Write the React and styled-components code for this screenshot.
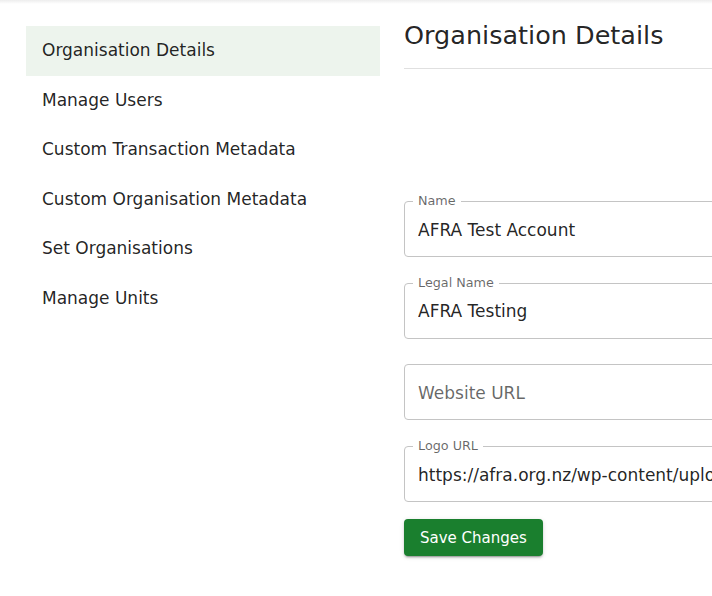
import React, { useState } from 'react'
import styled, { createGlobalStyle } from 'styled-components'

const GlobalStyle = createGlobalStyle`
  html, body {
    margin: 0;
    padding: 0;
    background: #fff;
  }
  body {
    font-family: 'DejaVu Sans', 'Liberation Sans', sans-serif;
    font-size: 17px;
    color: rgba(0, 0, 0, 0.87);
  }
  * {
    box-sizing: border-box;
  }
`

const navItems = [
  'Organisation Details',
  'Manage Users',
  'Custom Transaction Metadata',
  'Custom Organisation Metadata',
  'Set Organisations',
  'Manage Units',
]

const fields = [
  { label: 'Name', value: 'AFRA Test Account' },
  { label: 'Legal Name', value: 'AFRA Testing' },
  { label: 'Website URL', value: '' },
  {
    label: 'Logo URL',
    value: 'https://afra.org.nz/wp-content/uploads/2021/03/afra-logo.png',
  },
]

const App = () => {
  const [active, setActive] = useState(0)
  const [values, setValues] = useState(fields.map((f) => f.value))

  const update = (i, v) => {
    const next = [...values]
    next[i] = v
    setValues(next)
  }

  return (
    <Page>
      <GlobalStyle />
      <TopShade />
      <Layout>
        <Sidebar>
          {navItems.map((item, i) => (
            <NavItem
              key={item}
              $active={i === active}
              onClick={() => setActive(i)}
            >
              {item}
            </NavItem>
          ))}
        </Sidebar>
        <Main>
          <Heading>Organisation Details</Heading>
          <Form onSubmit={(e) => e.preventDefault()}>
            {fields.map((f, i) => (
              <Field key={f.label}>
                {values[i] ? <Label>{f.label}</Label> : null}
                <Input
                  type='text'
                  value={values[i]}
                  placeholder={values[i] ? '' : f.label}
                  onChange={(e) => update(i, e.target.value)}
                />
              </Field>
            ))}
            <SaveButton type='submit'>Save Changes</SaveButton>
          </Form>
        </Main>
      </Layout>
    </Page>
  )
}

const Page = styled.div`
  width: 712px;
  height: 596px;
  overflow: hidden;
`

const TopShade = styled.div`
  height: 4px;
  background: linear-gradient(rgba(0, 0, 0, 0.07), rgba(0, 0, 0, 0));
`

const Layout = styled.div`
  display: grid;
  grid-template-columns: 354px 520px;
  column-gap: 24px;
  padding: 14px 0 0 26px;
`

const Sidebar = styled.nav`
  display: flex;
  flex-direction: column;
  padding-top: 8px;
`

const NavItem = styled.div`
  padding: 12px 16px;
  font-size: 17px;
  line-height: 25.5px;
  cursor: pointer;
  color: rgba(0, 0, 0, 0.87);
  background: ${(p) => (p.$active ? '#edf4ed' : 'transparent')};
`

const Main = styled.main`
  display: flex;
  flex-direction: column;
`

const Heading = styled.h1`
  margin: 0;
  padding-bottom: 16px;
  font-size: 25.5px;
  font-weight: 400;
  line-height: 34px;
  border-bottom: 1px solid #e0e0e0;
`

const Form = styled.form`
  display: flex;
  flex-direction: column;
  align-items: flex-start;
  gap: 25.7px;
  margin-top: 132px;
`

const Field = styled.div`
  position: relative;
  width: 100%;
  height: 56px;
  border: 1px solid #c4c4c4;
  border-radius: 4px;
`

const Label = styled.span`
  position: absolute;
  top: -8px;
  left: 8px;
  padding: 0 5px;
  background: #fff;
  font-size: 12.75px;
  line-height: 14px;
  color: rgba(0, 0, 0, 0.6);
`

const Input = styled.input`
  display: block;
  width: 100%;
  height: 54px;
  padding: 1px 13px 0;
  border: none;
  outline: none;
  background: transparent;
  font-family: inherit;
  font-size: 17px;
  color: rgba(0, 0, 0, 0.87);

  &::placeholder {
    color: rgba(0, 0, 0, 0.6);
    opacity: 1;
  }
`

const SaveButton = styled.button`
  margin-top: -8.7px;
  padding: 7px 16px 5px;
  height: 37px;
  border: none;
  border-radius: 4px;
  background: #1a7f2e;
  color: #fff;
  font-family: inherit;
  font-size: 15px;
  line-height: 25px;
  cursor: pointer;
  box-shadow: 0 3px 1px -2px rgba(0, 0, 0, 0.2), 0 2px 2px 0 rgba(0, 0, 0, 0.14),
    0 1px 5px 0 rgba(0, 0, 0, 0.12);
`

export default App
